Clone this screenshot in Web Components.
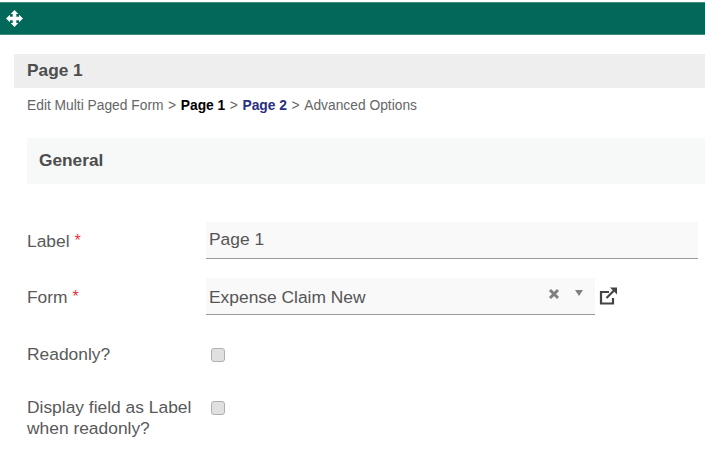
<!DOCTYPE html>
<html>
<head>
<meta charset="utf-8">
<title>Page 1</title>
<style>
	html, body { margin: 0; padding: 0; background: #fff; }
	body { font-family: "Liberation Sans", Arial, sans-serif; color: #555; width: 705px; height: 457px; overflow: hidden; }
</style>
</head>
<body>
<form-page>
	<top-bar></top-bar>
	<page-title>Page 1</page-title>
	<crumb-trail></crumb-trail>
	<section-head>General</section-head>
	<form-row label="Label" required><text-field value="Page 1"></text-field></form-row>
	<form-row label="Form" required kind="select"><select-field value="Expense Claim New"></select-field></form-row>
	<form-row label="Readonly?" kind="check"><check-box></check-box></form-row>
	<form-row label="Display field as Label when readonly?" kind="check2"><check-box></check-box></form-row>
</form-page>

<script>
class FormPage extends HTMLElement {
	constructor() {
		super();
		this.attachShadow({ mode: "open" });
		this.shadowRoot.innerHTML = `
			<style>
				:host { display: flex; flex-direction: column; padding-top: 2px; }
			</style>
			<slot></slot>
		`;
	}
}

class TopBar extends HTMLElement {
	constructor() {
		super();
		this.attachShadow({ mode: "open" });
		this.shadowRoot.innerHTML = `
			<style>
				:host {
					display: flex;
					align-items: center;
					height: 33px;
					padding-left: 7px;
					background: #02695a;
					box-shadow: inset 0 1px 0 #3d8a7e, inset 0 -1px 0 #3d8a7e;
				}
				svg { width: 17px; height: 17px; fill: #fff; margin: -1px 0 0 -1px; }
			</style>
			<svg viewBox="0 0 17 17">
				<path d="M8.5 0 12.300 4H10.300V6.700H13V4.700L17 8.500 13 12.300V10.300H10.300V13H12.300L8.500 17 4.700 13H6.700V10.300H4V12.300L0 8.500 4 4.700V6.700H6.700V4H4.700Z"/>
			</svg>
		`;
	}
}

class PageTitle extends HTMLElement {
	constructor() {
		super();
		this.attachShadow({ mode: "open" });
		this.shadowRoot.innerHTML = `
			<style>
				:host {
					display: flex;
					align-items: center;
					box-sizing: border-box;
					height: 34px;
					margin: 19px 0 0 14px;
					padding: 0 0 2px 13px;
					background: #eee;
					color: #4d4d4d;
					font-size: 17.3px;
					font-weight: bold;
				}
			</style>
			<slot></slot>
		`;
	}
}

class CrumbTrail extends HTMLElement {
	constructor() {
		super();
		this.attachShadow({ mode: "open" });
		this.shadowRoot.innerHTML = `
			<style>
				:host {
					display: flex;
					align-items: center;
					gap: 4.6px;
					height: 34px;
					padding-left: 27px;
					color: #666;
					font-size: 13.8px;
					white-space: pre;
				}
				.now { color: #000; font-weight: bold; }
				.next { color: #2a2f7f; font-weight: bold; }
			</style>
			<span>Edit Multi Paged Form</span><span>&gt;</span>
			<span class="now">Page 1</span><span>&gt;</span>
			<span class="next">Page 2</span><span>&gt;</span>
			<span>Advanced Options</span>
		`;
	}
}

class SectionHead extends HTMLElement {
	constructor() {
		super();
		this.attachShadow({ mode: "open" });
		this.shadowRoot.innerHTML = `
			<style>
				:host {
					display: flex;
					align-items: center;
					box-sizing: border-box;
					height: 46px;
					margin: 16px 0 38px 27px;
					padding: 0 0 2px 12px;
					background: #f7f8f8;
					color: #4d4d4d;
					font-size: 17.3px;
					font-weight: bold;
				}
			</style>
			<slot></slot>
		`;
	}
}

class FormRow extends HTMLElement {
	constructor() {
		super();
		this.attachShadow({ mode: "open" });
		const star = this.hasAttribute("required") ? ' <span class="req">*</span>' : "";
		this.shadowRoot.innerHTML = `
			<style>
				:host {
					display: grid;
					grid-template-columns: 179px 1fr;
					margin-left: 27px;
					margin-bottom: 19px;
					font-size: 17.4px;
					line-height: 21px;
					color: #595959;
				}
				:host([kind="select"]) { margin-bottom: 29px; }
				:host([kind="check"]) { margin-bottom: 32px; }
				.label { display: flex; align-items: center; }
				.wrap { display: block; width: 178px; }
				:host([kind="check2"]) .label { align-items: flex-start; }
				.req { color: #e8323c; font-size: 16px; vertical-align: 1px; }
			</style>
			<div class="label"><span class="wrap">${this.getAttribute("label")}${star}</span></div>
			<div class="field"><slot></slot></div>
		`;
	}
}

class TextField extends HTMLElement {
	constructor() {
		super();
		this.attachShadow({ mode: "open" });
		this.shadowRoot.innerHTML = `
			<style>
				:host {
					display: flex;
					align-items: center;
					box-sizing: border-box;
					width: 492px;
					height: 37px;
					padding: 0 0 2px 3px;
					background: #f9f9f9;
					border-bottom: 1px solid #999;
					color: #555;
				}
			</style>
			${this.getAttribute("value")}
		`;
	}
}

class SelectField extends HTMLElement {
	constructor() {
		super();
		this.attachShadow({ mode: "open" });
		this.shadowRoot.innerHTML = `
			<style>
				:host { display: flex; align-items: center; }
				.box {
					display: flex;
					align-items: center;
					box-sizing: border-box;
					width: 389px;
					height: 37px;
					padding-left: 3px;
					background: #f9f9f9;
					border-bottom: 1px solid #999;
					color: #555;
				}
				.value { flex: 1; padding-top: 2px; }
				.clear { width: 12px; height: 12px; margin-right: 15px; margin-top: -5px; }
				.arrow { width: 8px; height: 6px; margin-right: 12px; margin-top: -6px; }
				.open { width: 19px; height: 18px; margin-left: 4px; margin-top: -1px; }
			</style>
			<div class="box">
				<span class="value">${this.getAttribute("value")}</span>
				<svg class="clear" viewBox="0 0 12 12"><path d="M2 2 10 10M10 2 2 10" stroke="#808080" stroke-width="3"/></svg>
				<svg class="arrow" viewBox="0 0 8 6"><path d="M0 0H8L4 6Z" fill="#808080"/></svg>
			</div>
			<svg class="open" viewBox="0 0 19 18" fill="none" stroke="#444" stroke-width="2.200">
				<path d="M10 5H2V16.500H14V11"/>
				<path d="M7.500 11 15 3.500"/>
				<path d="M11 0.500H18V7.500Z" fill="#444" stroke="none"/>
			</svg>
		`;
	}
}

class CheckBox extends HTMLElement {
	constructor() {
		super();
		this.attachShadow({ mode: "open" });
		this.shadowRoot.innerHTML = `
			<style>
				:host { display: flex; align-items: center; height: 21px; padding-left: 5px; }
				i {
					display: block;
					box-sizing: border-box;
					width: 14px;
					height: 14px;
					border: 1px solid #b0b0b0;
					border-radius: 3px;
					background: #e0e0e0;
				}
			</style>
			<i></i>
		`;
	}
}

customElements.define('form-page', FormPage);
customElements.define('top-bar', TopBar);
customElements.define('page-title', PageTitle);
customElements.define('crumb-trail', CrumbTrail);
customElements.define('section-head', SectionHead);
customElements.define('form-row', FormRow);
customElements.define('text-field', TextField);
customElements.define('select-field', SelectField);
customElements.define('check-box', CheckBox);
</script>
</body>
</html>
